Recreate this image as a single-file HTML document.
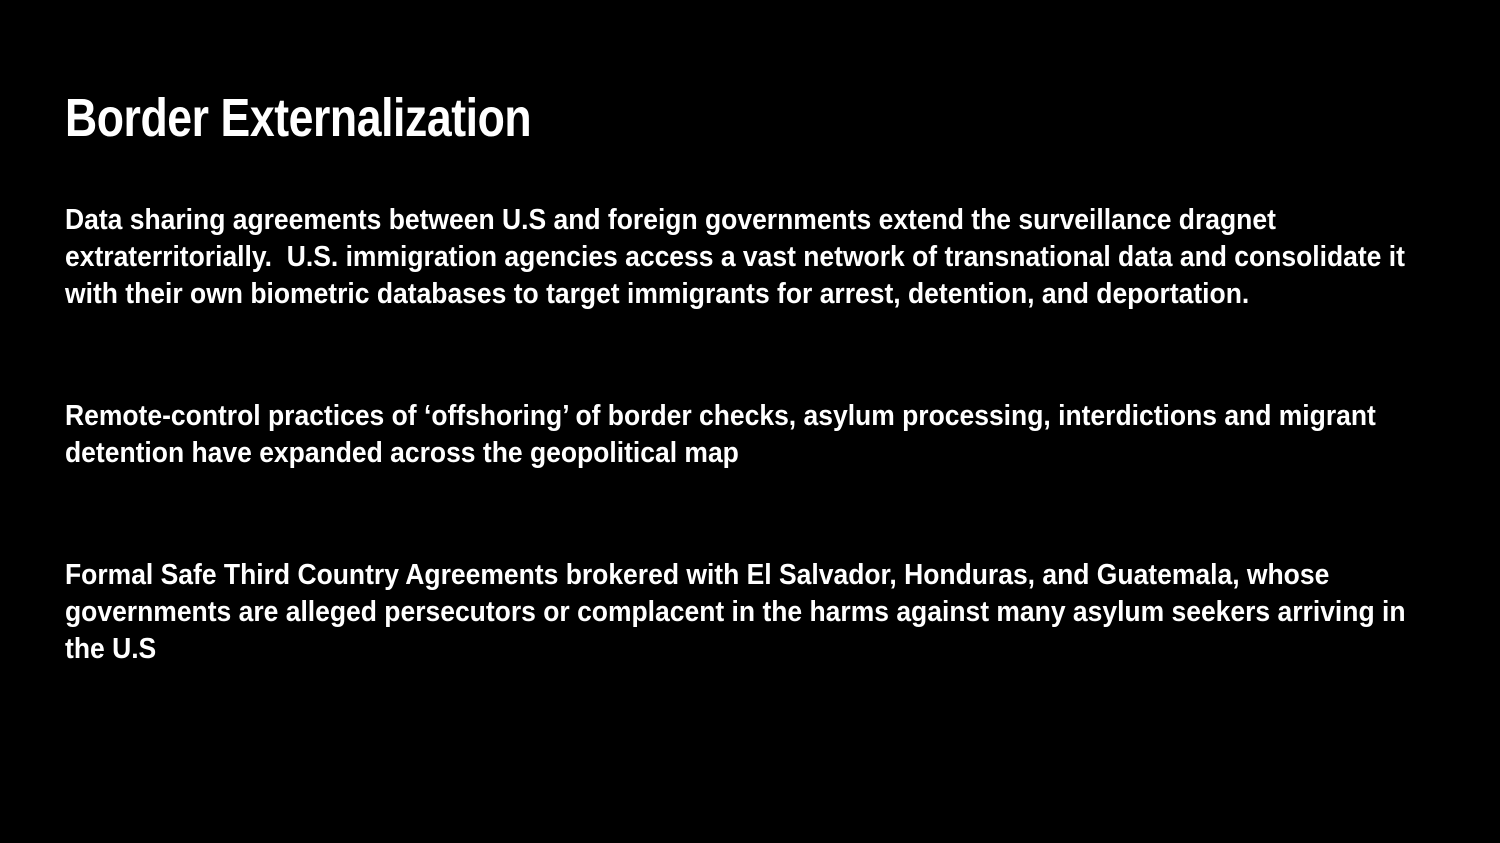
<!DOCTYPE html>
<html><head><meta charset="utf-8"><style>
html,body{margin:0;padding:0;background:#000;}
body{width:1500px;height:843px;position:relative;overflow:hidden;color:#fff;
font-family:"Liberation Sans",sans-serif;font-weight:bold;}
.t{position:absolute;left:65px;top:88px;font-size:54px;line-height:60px;white-space:nowrap;letter-spacing:-0.5px;transform:scaleX(0.825);transform-origin:0 0}
.p{position:absolute;left:65px;font-size:28.5px;line-height:37px;white-space:nowrap;transform:scaleX(0.929);transform-origin:0 0}
</style></head><body>
<div class="t">Border Externalization</div>
<div class="p" style="top:202px">Data sharing agreements between U.S and foreign governments extend the surveillance dragnet<br>extraterritorially.&nbsp; U.S. immigration agencies access a vast network of transnational data and consolidate it<br>with their own biometric databases to target immigrants for arrest, detention, and deportation.</div>
<div class="p" style="top:398px">Remote-control practices of ‘offshoring’ of border checks, asylum processing, interdictions and migrant<br>detention have expanded across the geopolitical map</div>
<div class="p" style="top:557px">Formal Safe Third Country Agreements brokered with El Salvador, Honduras, and Guatemala, whose<br>governments are alleged persecutors or complacent in the harms against many asylum seekers arriving in<br>the U.S</div>
</body></html>
